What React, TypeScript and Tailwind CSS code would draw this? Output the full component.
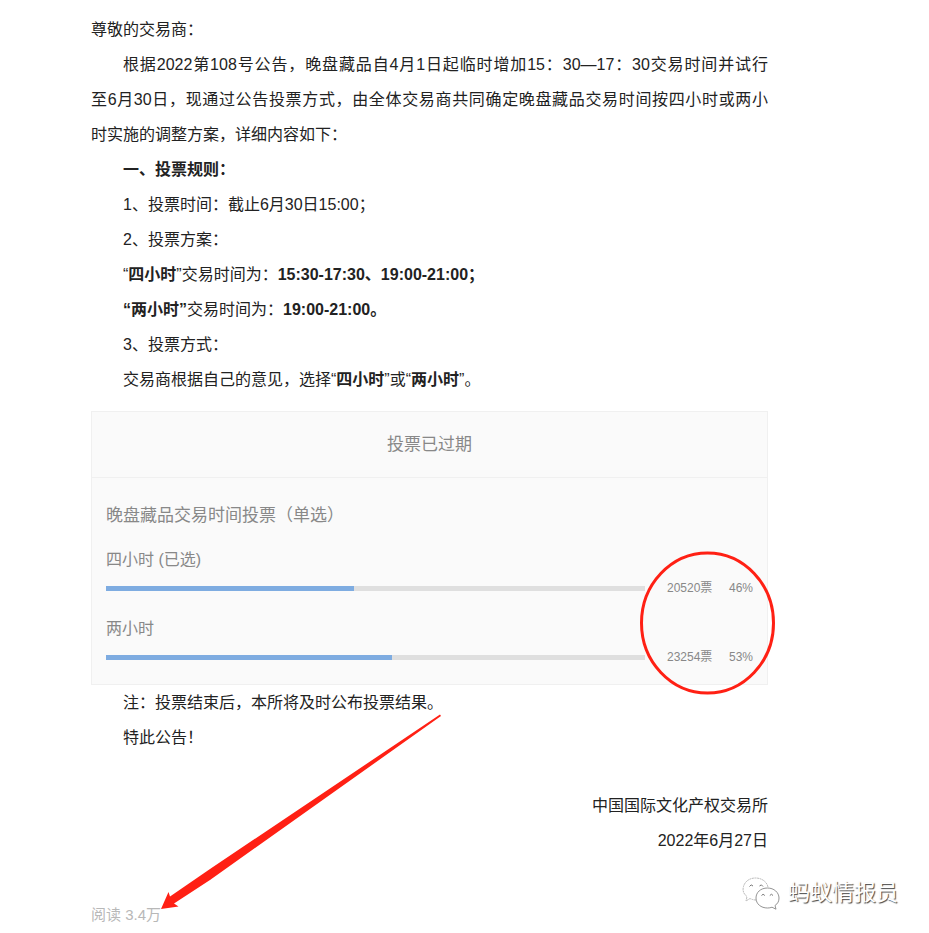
// ============================================
// Trading Hours Vote - Announcement Page
// ============================================

const pollOptions = [
  { id: 'four', label: '四小时 (已选)', votes: 20520, percent: 46 },
  { id: 'two', label: '两小时', votes: 23254, percent: 53 },
];

function Poll() {
  return (
    <section className="my-[14px] border border-[#f0f0f0] bg-[#fafafa] text-[#888]">
      <h2 className="border-b border-[#f0f0f0] py-5 text-center text-[17px] leading-[25px]">
        投票已过期
      </h2>
      <div className="px-[14px] pt-[25px] pb-[18px]">
        <h3 className="text-[17px] leading-[25px]">晚盘藏品交易时间投票（单选）</h3>
        {pollOptions.map((option) => (
          <div key={option.id} className="pt-5">
            <div id={option.id} className="text-base leading-6">
              {option.label}
            </div>
            <div className="mt-2 flex items-center text-xs leading-[17px]">
              <div
                role="progressbar"
                aria-labelledby={option.id}
                aria-valuenow={option.percent}
                className="h-[5px] flex-1 bg-[#dfdfdf]"
              >
                <div className="h-full bg-[#7eace1]" style={{ width: `${option.percent}%` }} />
              </div>
              <span className="ml-[22px] w-[62px]">{option.votes}票</span>
              <span>{option.percent}%</span>
            </div>
          </div>
        ))}
      </div>
    </section>
  );
}

// Red circle round the results and the arrow to the read count
function Annotations() {
  return (
    <svg
      className="pointer-events-none absolute top-0 left-0"
      width="929"
      height="933"
      viewBox="0 0 929 933"
      aria-hidden="true"
    >
      <ellipse cx="707.5" cy="623" rx="66" ry="70" fill="none" stroke="#ff2014" strokeWidth="3" />
      <path
        d="M440 714.5 L210 869 L170 896.5 L168.5 892 L161 909 L178.5 906.5 L174 903.5 L210 880 L441 716 Z"
        fill="#ff2014"
      />
    </svg>
  );
}

function WeChatMark() {
  return (
    <svg width="38" height="34" viewBox="0 0 38 34" fill="none" aria-hidden="true">
      <path
        d="M14 24 Q11 24 8 22.5 L4 25 L5 20.5 C1 17.5 0.5 14 1.5 10.5 C3 5 8 2 13.5 2 C20 2 25 6 26 11"
        stroke="#aaa"
        strokeWidth="0.8"
        strokeDasharray="2 0.6"
      />
      <path
        d="M25.5 12 C18.5 12 14 16.5 14 22 C14 28 19 32 25.5 32 Q28 32 30 31.2 L34 33.2 L33 29.5 C36 27.5 37 25 37 22 C37 16.5 32 12 25.5 12 Z"
        fill="#fff"
        stroke="#888"
        strokeWidth="0.9"
      />
      <path
        d="M7.5 10.5 Q9 7.5 11 10 M17.5 10 Q19.5 7.5 21 10.5 M19.5 19.5 Q21 17 22.8 19.5 M27.8 19.5 Q29.5 17 31 19.5"
        stroke="#777"
        strokeWidth="1"
      />
    </svg>
  );
}

export default function App() {
  return (
    <div className="relative min-h-screen bg-white pt-3 pr-[161px] pb-1 pl-[91px] font-['Liberation_Sans','Noto_Sans_CJK_SC',sans-serif] text-[#222]">
      <article lang="zh-CN" className="text-base leading-[35px]">
        <p>尊敬的交易商：</p>
        <p className="text-justify indent-8">
          根据2022第108号公告，晚盘藏品自4月1日起临时增加15：30—17：30交易时间并试行
          <span className="whitespace-nowrap">至6月30日</span>
          ，现通过公告投票方式，由全体交易商共同确定晚盘藏品交易时间按四小时或两小
          <span className="whitespace-nowrap">时实施</span>
          的调整方案，详细内容如下：
        </p>
        <div className="pl-8">
          <h1 className="font-bold">一、投票规则：</h1>
          <p>1、投票时间：截止6月30日15:00；</p>
          <p>2、投票方案：</p>
          <p>
            “<strong>四小时</strong>”交易时间为：<strong>15:30-17:30、19:00-21:00；</strong>
          </p>
          <p>
            <strong>“两小时”</strong>交易时间为：<strong>19:00-21:00。</strong>
          </p>
          <p>3、投票方式：</p>
          <p>
            交易商根据自己的意见，选择“<strong>四小时</strong>”或“<strong>两小时</strong>”。
          </p>
        </div>

        <Poll />

        <div className="-mt-[14px] pl-8">
          <p>注：投票结束后，本所将及时公布投票结果。</p>
          <p>特此公告！</p>
        </div>
        <div className="mt-[33px] text-right">
          <p>中国国际文化产权交易所</p>
          <p>2022年6月27日</p>
        </div>
      </article>

      <footer className="mt-[45px] text-[15px] leading-6 text-[#b8b8b8]">阅读 3.4万</footer>

      {/* Account watermark */}
      <div className="absolute top-[875px] right-[31px] flex items-center gap-2">
        <WeChatMark />
        <span className="text-[22px] leading-9 text-white [text-shadow:1px_1px_1px_#444]">
          蚂蚁情报员
        </span>
      </div>

      <Annotations />
    </div>
  );
}
